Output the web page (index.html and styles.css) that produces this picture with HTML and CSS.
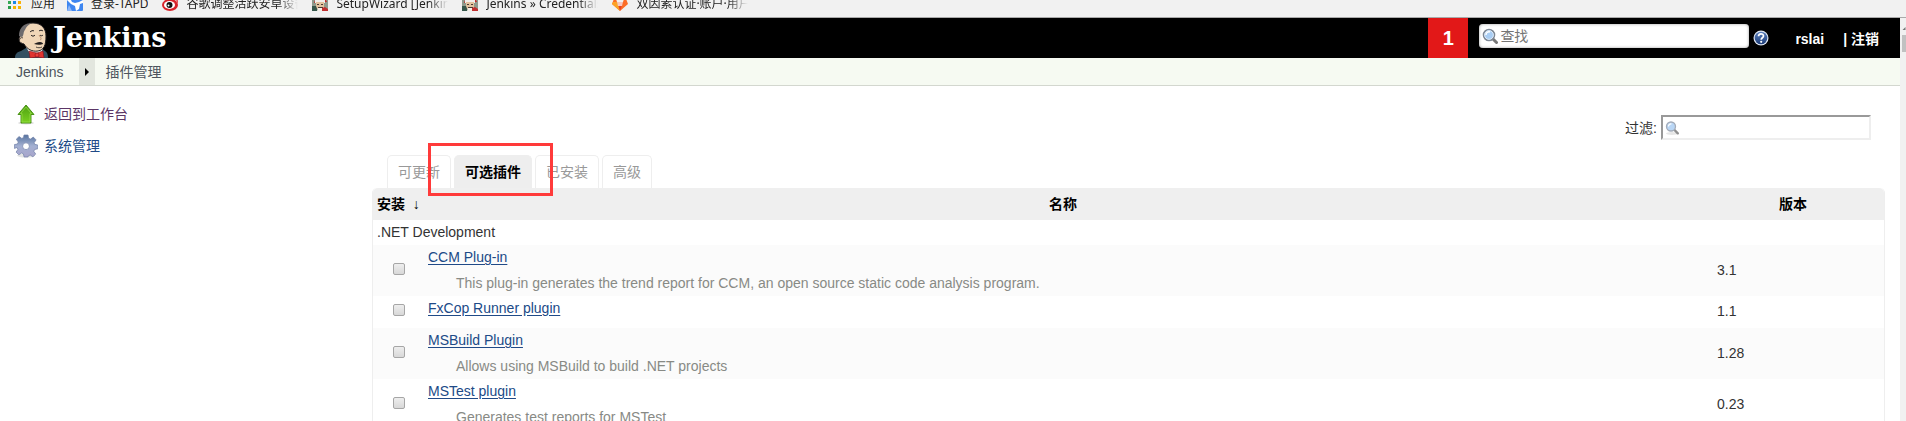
FILE: index.html
```html
<!DOCTYPE html>
<html lang="zh-CN">
<head>
<meta charset="utf-8">
<title>插件管理 [Jenkins]</title>
<link rel="stylesheet" href="styles.css">
</head>
<body>
<svg width="0" height="0" class="defs" aria-hidden="true">
  <defs>
    <linearGradient id="green" x1="0" y1="0" x2="0" y2="1"><stop offset="0" stop-color="#4fa012"/><stop offset="1" stop-color="#79d020"/></linearGradient>
    <linearGradient id="steel" x1="0" y1="0" x2="0" y2="1"><stop offset="0" stop-color="#56749f"/><stop offset="0.5" stop-color="#a3b0d2"/><stop offset="1" stop-color="#a9a5cc"/></linearGradient>
    <linearGradient id="blue" x1="0" y1="0" x2="0" y2="1"><stop offset="0" stop-color="#5b80bd"/><stop offset="1" stop-color="#1c3c78"/></linearGradient>
    <symbol id="santa" viewBox="0 0 16 16">
      <rect width="16" height="16" fill="#8d9a8c"/>
      <path d="M2 8 4 2 12 1 15 7z" fill="#c22a2a"/>
      <rect x="3" y="5" width="10" height="3" fill="#f1eeea"/>
      <rect x="4" y="7" width="8" height="7" fill="#e2c39f"/>
      <path d="M5 9h2v1H5zM9 9h2v1H9zM6 12h5v1H6z" fill="#4b3a33"/>
      <path d="M0 11h4l2 5H0z" fill="#35564a"/>
      <path d="M10 13l3-1 3 2v2h-6z" fill="#c03030"/>
      <path d="M6 13h4v3H5z" fill="#f3f0e8"/>
    </symbol>
    <symbol id="lens" viewBox="0 0 16 16">
      <path d="M10 10l4.500 4.500" stroke="#777" stroke-width="3" stroke-linecap="round"/>
      <circle cx="7" cy="7" r="5.500" fill="#a9cdf3" stroke="#7d8794" stroke-width="1.600"/>
      <circle cx="7" cy="7" r="4.400" fill="none" stroke="#e8f2fc" stroke-width="0.800"/>
      <path d="M4 7a3 3 0 0 1 4-3" fill="none" stroke="#fff" stroke-width="1.400"/>
    </symbol>
    <symbol id="lens-light" viewBox="0 0 16 16">
      <ellipse cx="8" cy="13.500" rx="6" ry="1.500" fill="#e6e6e6"/>
      <path d="M10 9.500l3.800 3.800" stroke="#8f8f8f" stroke-width="2.400" stroke-linecap="round"/>
      <circle cx="7" cy="6.500" r="4.500" fill="#b9d6f5" stroke="#a3abb8" stroke-width="1.300"/>
      <path d="M4.500 6.500a2.500 2.500 0 0 1 3-2.500" fill="none" stroke="#fff" stroke-width="1.200"/>
    </symbol>
  </defs>
</svg>

<nav class="bookmarks" aria-label="书签">
  <a class="bookmark bookmark-short" href="#"><svg class="favicon" viewBox="0 0 16 16"><g><path d="M0 1h3v3H0z" fill="#e94335"/><path d="M5 1h3v3H5z" fill="#e94335"/><path d="M10 1h3v3h-3z" fill="#fbbc05"/><path d="M0 6h3v3H0z" fill="#34a853"/><path d="M5 6h3v3H5z" fill="#1a86e8"/><path d="M10 6h3v3h-3z" fill="#fbb005"/><path d="M0 11h3v3H0z" fill="#2a9d4a"/><path d="M5 11h3v3H5z" fill="#f5b400"/><path d="M10 11h3v3h-3z" fill="#f5b400"/></g></svg><span>应用</span></a>
  <a class="bookmark bookmark-short" href="#"><svg class="favicon" viewBox="0 0 16 16"><rect width="16" height="16" rx="1" fill="#3f86f0"/><path d="M0 5h4l1 2 3 1 4-1 4-2v3l-3 1-1 5-3 2-1-5-2-1-2-1z" fill="#fff"/><path d="M2 10l3 6H0z" fill="#8db6f7"/></svg><span>登录-TAPD</span></a>
  <a class="bookmark" href="#"><svg class="favicon" viewBox="0 0 16 16"><ellipse cx="8" cy="10" rx="8" ry="6" fill="#d8232a"/><ellipse cx="7.500" cy="10" rx="5.500" ry="3.900" fill="#fff"/><circle cx="7.500" cy="10" r="3" fill="#111"/><circle cx="6.500" cy="10.500" r="1" fill="#fff"/><path d="M10 3c3-1 6 1 5 5" fill="none" stroke="#e6454a" stroke-width="1.500"/></svg><span>谷歌调整活跃安卓设备</span></a>
  <a class="bookmark" href="#"><svg class="favicon"><use href="#santa"/></svg><span>SetupWizard [Jenkins]</span></a>
  <a class="bookmark" href="#"><svg class="favicon"><use href="#santa"/></svg><span>Jenkins » Credentials</span></a>
  <a class="bookmark" href="#"><svg class="favicon" viewBox="0 0 16 16"><path d="M0 9 3 1l2 6h6l2-6 3 8-8 7z" fill="#fc6d26"/><path d="M5 7h6l-3 9z" fill="#e24329"/><path d="M0 9l1-2h4l3 9z" fill="#fca326"/><path d="M5 7h6l-1 4H6z" fill="#fff" opacity=".7"/></svg><span>双因素认证·账户·用户设置</span></a>
</nav>

<div class="window">
  <div class="page">
    <header class="header">
      <a class="logo" href="#">
        <svg class="butler" viewBox="0 0 34 36">
          <path d="M0 36c0-4 2-6 6-7l5-3h15l4 3c2 1 3 3 3 7z" fill="#335061"/>
          <path d="M11 25l5 8 10-1 2-6z" fill="#fff"/>
          <path d="M9 22C4 21 3 16 5 15 4 6 9 1 18 1c9 0 13 6 13 13 0 9-2 14-8 15-6 1-11-2-14-7z" fill="#f0d6b7" stroke="#231f20" stroke-width="1"/>
          <path d="M7 15C9 14 8 10 10 8c1-3 3-5 6-6.500C9 1 4 6 4 14z" fill="#6d6b6d"/>
          <path d="M8 16c-4-2-5 5-1 5" fill="#f0d6b7" stroke="#231f20" stroke-width=".8"/>
          <path d="M15 10c1-1 3-2 4-1M24 9c1-1 3-1 4 0M16 13c1 1.500 3 1.500 4 0M25 13c1 1 2 1 3 0" fill="none" stroke="#231f20" stroke-width="1"/>
          <path d="M24 13c2 3 3 4 1 5" fill="none" stroke="#b58a6a" stroke-width="1"/>
          <path d="M19 22c2-1 3-2 6-2 2 0 3 1 3 2-2 1-6 1-9 0z" fill="#231f20"/>
          <path d="M21 25c2 1 4 1 6 0" fill="none" stroke="#231f20" stroke-width=".8"/>
          <path d="M14 29l8 2 6-2 1 7-7-1-7 1z" fill="#e0332f" stroke="#81131c" stroke-width=".6"/>
          <circle cx="22" cy="33" r="2" fill="#ef3d3a" stroke="#81131c" stroke-width=".6"/>
        </svg>
        <span class="wordmark">Jenkins</span>
      </a>
      <a class="alert" href="#">1</a>
      <div class="search">
        <svg class="icon16"><use href="#lens"/></svg>
        <input class="search-input" type="text" placeholder="查找" aria-label="查找">
      </div>
      <a class="help" href="#" aria-label="帮助"><svg class="icon16" viewBox="0 0 16 16"><circle cx="8" cy="8" r="7.500" fill="#dfe6f2"/><circle cx="8" cy="8" r="6.300" fill="url(#blue)"/><path d="M5.500 6.300C5.500 3 10.500 3 10.500 6c0 1.700-2.300 1.800-2.300 3.700" fill="none" stroke="#fff" stroke-width="1.700"/><circle cx="8.200" cy="11.800" r="1.100" fill="#fff"/></svg></a>
      <div class="login"><a href="#">rslai</a><span>| <a href="#">注销</a></span></div>
    </header>

    <nav class="breadcrumbs" aria-label="breadcrumb">
      <a class="crumb" href="#">Jenkins</a>
      <span class="crumb-arrow"><svg width="4" height="8" viewBox="0 0 4 8"><path d="M0 0l4 4-4 4z"/></svg></span>
      <a class="crumb" href="#">插件管理</a>
    </nav>

    <div class="body">
      <nav class="tasks">
        <a class="task task-visited" href="#"><svg class="icon24" viewBox="0 0 24 24"><ellipse cx="12" cy="21" rx="8" ry="1.500" fill="#ddd"/><path d="M12 3l8 9.500h-3V21H7v-8.500H4z" fill="url(#green)" stroke="#3f8a0c" stroke-width=".9"/><path d="M12 5l5.500 6.600H16V20H8v-8.400H6.500z" fill="none" stroke="#9be04d" stroke-width=".7"/></svg>返回到工作台</a>
        <a class="task" href="#"><svg class="icon24" viewBox="0 0 24 24"><ellipse cx="12" cy="21.500" rx="9" ry="2" fill="#e4e4e4"/><g fill="url(#steel)" stroke="#7080a8" stroke-width=".7"><path fill-rule="evenodd" d="M10 1h4l.6 3.300 1.900.8 2.800-2 2.800 2.800-2 2.800.6 1.600 3.100.7v3.800l-3.200.7-.8 1.800 1.900 2.800-2.800 2.700-2.700-1.800-1.800.8L13.900 23h-3.800l-.7-3.200-1.800-.8-2.800 1.800-2.700-2.700 1.800-2.700-.8-1.900L.4 14.400v-3.800l3-.6.9-1.900-2-2.900 2.800-2.700 2.700 1.900 1.700-.8zM12 8.800a3.400 3.400 0 1 0 0 6.800 3.400 3.400 0 0 0 0-6.800z"/></g></svg>系统管理</a>
      </nav>

      <main class="main">
        <div class="filter">
          <label for="filter-box">过滤:</label>
          <div class="filter-field"><svg class="icon16"><use href="#lens-light"/></svg><input class="filter-input" id="filter-box" type="text"></div>
        </div>

        <nav class="tabs">
          <a class="tab" href="#">可更新</a>
          <a class="tab tab-active" href="#">可选插件</a>
          <a class="tab" href="#">已安装</a>
          <a class="tab" href="#">高级</a>
          <div class="highlight"></div>
        </nav>

        <table class="plugins">
          <thead>
            <tr><th class="col-install">安装&nbsp; <span class="sort">↓</span></th><th>名称</th><th class="col-version">版本</th></tr>
          </thead>
          <tbody>
            <tr class="category"><td colspan="3">.NET Development</td></tr>
            <tr class="shaded"><td class="check"><input type="checkbox" aria-label="CCM Plug-in"></td><td class="name"><a href="#">CCM Plug-in</a><p>This plug-in generates the trend report for CCM, an open source static code analysis program.</p></td><td>3.1</td></tr>
            <tr><td class="check"><input type="checkbox" aria-label="FxCop Runner plugin"></td><td class="name"><a href="#">FxCop Runner plugin</a></td><td>1.1</td></tr>
            <tr class="shaded"><td class="check"><input type="checkbox" aria-label="MSBuild Plugin"></td><td class="name"><a href="#">MSBuild Plugin</a><p>Allows using MSBuild to build .NET projects</p></td><td>1.28</td></tr>
            <tr><td class="check"><input type="checkbox" aria-label="MSTest plugin"></td><td class="name"><a href="#">MSTest plugin</a><p>Generates test reports for MSTest</p></td><td>0.23</td></tr>
          </tbody>
        </table>
      </main>
    </div>
  </div>
  <div class="scrollbar"><svg class="scroll-up" viewBox="0 0 3 4"><path d="M0 3l3-3v3z" fill="#777"/></svg><div class="thumb"></div></div>
</div>
</body>
</html>
```

FILE: styles.css
```css
* { box-sizing: border-box; }

body {
  margin: 0;
  height: 100vh;
  overflow: hidden;
  display: flex;
  flex-direction: column;
  background: #fff;
  color: #333;
  font: 14px/16px "Liberation Sans", "Noto Sans CJK SC", sans-serif;
}

a { color: #204a87; text-decoration: none; }
svg { display: block; flex: none; }
.defs { position: absolute; }

/* Bookmarks strip, scrolled under the top edge of the window */
.bookmarks {
  flex: none;
  display: flex;
  align-items: flex-end;
  height: 18px;
  padding: 0 8px 6px;
  gap: 14px;
  overflow: hidden;
  background: #f1f1f1;
  border-bottom: 1px solid #aaa;
  font: 12px/18px "Noto Sans", "Noto Sans CJK SC", sans-serif;
}
.bookmark { display: flex; gap: 8px; height: 16px; color: #222; white-space: nowrap; }
.bookmark span {
  width: 112px;
  height: 18px;
  overflow: hidden;
  -webkit-mask-image: linear-gradient(to right, #000 92px, transparent 112px);
  mask-image: linear-gradient(to right, #000 92px, transparent 112px);
}
.bookmark-short span {
  width: auto;
  -webkit-mask-image: none;
  mask-image: none;
}
.bookmark-short:first-child { gap: 7px; margin-right: -2px; }
.favicon { width: 16px; height: 16px; }

.window { flex: 1; display: flex; min-height: 0; }
.page { flex: 1; min-width: 0; }

.scrollbar { width: 6px; padding: 9px 0 0 2px; background: #f1f1f1; }
.scroll-up { width: 4px; height: 4px; margin-bottom: 4px; }
.thumb { height: 17px; background: #c1c1c1; }

.header {
  display: flex;
  align-items: center;
  height: 40px;
  padding: 0 21px 0 15px;
  background: #000;
  color: #fff;
  font-weight: bold;
}
.header a { color: #fff; }
.logo { display: flex; align-items: center; gap: 4px; margin-right: auto; }
.butler { width: 34px; height: 36px; align-self: flex-end; margin-top: 4px; }
.wordmark { font: bold 27px/40px "DejaVu Serif", serif; }
.alert {
  width: 40px;
  margin-right: 11px;
  background: #e21818;
  font-size: 20px;
  line-height: 40px;
  text-align: center;
}
.search {
  display: flex;
  align-items: center;
  width: 270px;
  height: 24px;
  padding: 0 3px;
  gap: 2px;
  margin: 0 4px 4px 0;
  border-radius: 4px;
  background: #fff;
  box-shadow: inset 0 0 3px #999;
}
.search-input, .filter-input {
  flex: 1;
  min-width: 0;
  padding: 0;
  border: 0;
  outline: 0;
  background: none;
  color: #333;
  font: inherit;
  font-weight: normal;
}
.search-input::placeholder { color: #757575; }
.icon16 { width: 16px; height: 16px; }
.login { display: flex; gap: 19px; margin: 2px 0 0 26px; }

.breadcrumbs {
  display: flex;
  height: 28px;
  padding-left: 16px;
  gap: 10px;
  background: #f6faf2;
  border-bottom: 1px solid #d3d7cf;
  line-height: 28px;
}
.crumb { color: #4d545d; }
.crumb:first-child { margin-right: 6px; }
.crumb-arrow {
  display: flex;
  align-items: center;
  justify-content: center;
  width: 16px;
  background: #e2e6de;
}

.body { display: flex; }
.tasks {
  flex: none;
  display: flex;
  flex-direction: column;
  gap: 8px;
  width: 372px;
  padding: 16px 14px;
}
.task { display: flex; align-items: center; gap: 6px; height: 24px; }
.task-visited { color: #5c3566; }
.icon24 { width: 24px; height: 24px; }

.main { flex: 1; min-width: 0; padding: 29px 15px 0 0; }

.filter {
  display: flex;
  align-items: center;
  justify-content: flex-end;
  gap: 4px;
  padding-right: 14px;
  margin-bottom: 15px;
}
.filter-field {
  display: flex;
  align-items: center;
  width: 210px;
  height: 25px;
  padding-left: 1px;
  gap: 2px;
  border: 2px solid #eee;
  border-top-color: #999;
  border-left-color: #999;
}

.tabs { position: relative; display: flex; gap: 3px; padding-left: 15px; }
.tab {
  height: 33px;
  padding: 0 10px;
  border: 1px solid #eee;
  border-bottom: 0;
  border-radius: 5px 5px 0 0;
  color: #999;
  line-height: 33px;
}
.tab-active { background: #eee; color: #000; font-weight: bold; }

/* Red marker drawn over the selected tab */
.highlight {
  position: absolute;
  left: 56px;
  top: -12px;
  width: 125px;
  height: 53px;
  border: 3px solid #ff3a3a;
}

.plugins {
  width: 100%;
  border: 1px solid #eee;
  border-top: 0;
  border-radius: 5px 5px 0 0;
  border-collapse: separate;
  border-spacing: 0;
  table-layout: fixed;
}
.plugins th {
  height: 32px;
  padding: 0 15px 0 4px;
  background: #efefef;
  color: #000;
  white-space: nowrap;
}
.plugins th:first-child { padding-right: 0; border-top-left-radius: 5px; text-align: left; }
.plugins th:last-child { border-top-right-radius: 5px; }
.sort { font: 14px/16px "Liberation Serif", serif; }
.plugins .col-install { width: 51px; }
.plugins .col-version { width: 171px; }
.plugins td { height: 32px; padding: 0 4px 2px; }
.plugins .category td { height: 25px; }
.shaded { background: #fbfbfb; }
.plugins .check { padding: 0; text-align: center; }
.check input {
  appearance: none;
  display: block;
  width: 12px;
  height: 12px;
  margin: 0 auto 4px;
  border: 1px solid #a6a6a6;
  border-radius: 2px;
  background: linear-gradient(#eee, #d8d8d8);
}
.plugins .name { padding: 4px 4px 5px; vertical-align: top; }
.name a { text-decoration: underline; text-underline-offset: 2px; }
.name p { margin: 10px 0 0 28px; color: #888a85; }
```
